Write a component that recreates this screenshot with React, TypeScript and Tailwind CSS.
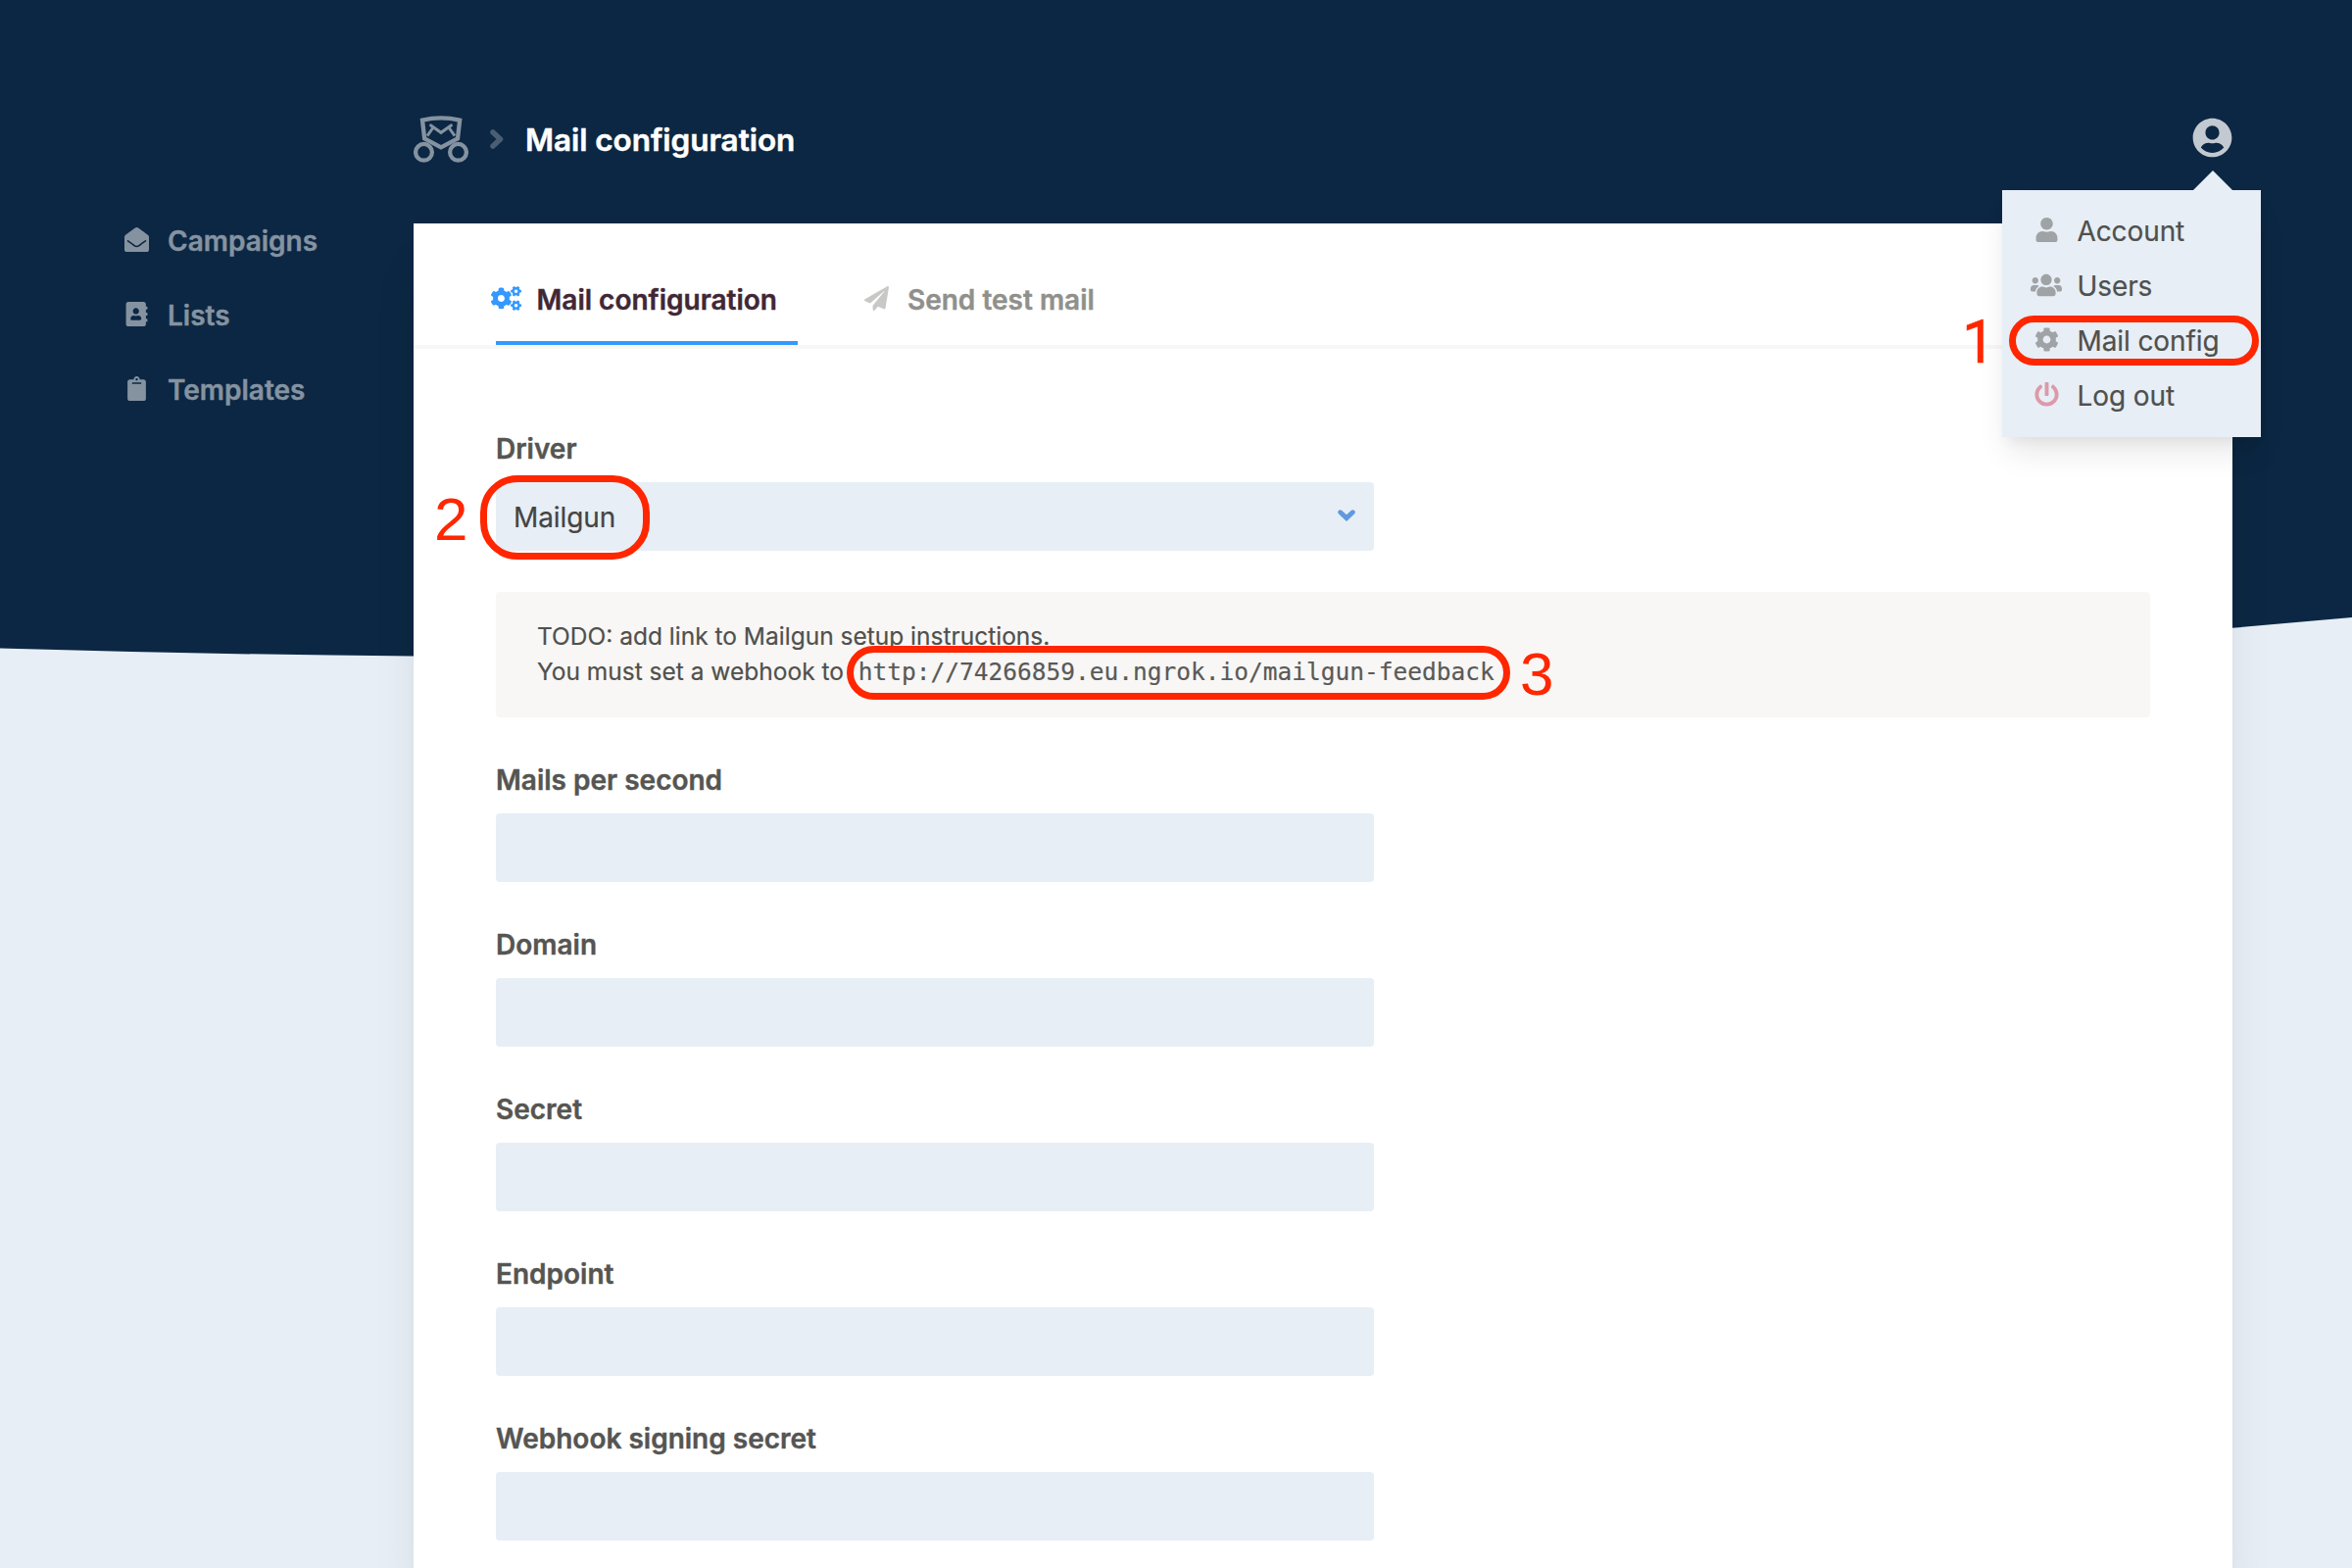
import React from "react";
import type { ReactNode } from "react";
import {
  FaAddressBook,
  FaClipboard,
  FaCog,
  FaCogs,
  FaEnvelopeOpen,
  FaPaperPlane,
  FaPowerOff,
  FaUser,
  FaUserCircle,
  FaUsers,
} from "react-icons/fa";

/** Fixed-width slot that keeps labels aligned whatever the icon's width. */
function IconSlot({ children, className = "" }: { children: ReactNode; className?: string }) {
  return <span className={`flex w-[21px] shrink-0 items-center justify-center pb-[3px] ${className}`}>{children}</span>;
}

function Backdrop() {
  return (
    <svg className="absolute top-0 left-0" width="2400" height="700" viewBox="0 0 2400 700" aria-hidden="true">
      <path
        d="M0 0H2400V630L2278 640.8C1700 690 1000 674 422 669.5Q211 667.7 0 661.5Z"
        fill="#0c2743"
      />
    </svg>
  );
}

function Logo() {
  return (
    <svg width="56" height="48" viewBox="66 84 168 144" fill="none" stroke="#8593a1" aria-hidden="true">
      <path d="M93 98Q150 84 207.500 98L201 154L150 181L99.500 154Z" strokeWidth="13" />
      <path d="M119 114L150 136L181 114" strokeWidth="9.500" strokeLinecap="round" />
      <path d="M125 122L108 146M175 122L192 146" strokeWidth="8.500" />
      <circle cx="97.500" cy="196" r="25.200" strokeWidth="12.800" />
      <circle cx="202.500" cy="196" r="25.200" strokeWidth="12.800" />
    </svg>
  );
}

const NAV = [
  { label: "Campaigns", Icon: FaEnvelopeOpen },
  { label: "Lists", Icon: FaAddressBook },
  { label: "Templates", Icon: FaClipboard },
];

function Sidebar() {
  return (
    <nav className="flex w-[422px] shrink-0 flex-col pt-[208px] pl-[129px]">
      {NAV.map(({ label, Icon }) => (
        <a key={label} className="flex h-[76px] items-center gap-[21px] text-[28px] font-semibold text-[#8593a1] [-webkit-text-stroke:0.4px]">
          <IconSlot>
            <Icon className="h-[25px] w-auto shrink-0" />
          </IconSlot>
          {label}
        </a>
      ))}
    </nav>
  );
}

const MENU = [
  { label: "Account", Icon: FaUser, tone: "text-[#9fa3a6]" },
  { label: "Users", Icon: FaUsers, tone: "text-[#9fa3a6]" },
  { label: "Mail config", Icon: FaCog, tone: "text-[#9fa3a6]" },
  { label: "Log out", Icon: FaPowerOff, tone: "text-[#dc9aa8]" },
];

function UserMenu() {
  return (
    <div className="absolute top-[74px] -right-[29px] z-10 h-[252px] w-[264px] bg-[#e7eef6] shadow-[0_20px_30px_-6px_rgba(0,0,0,0.1),0_8px_12px_-4px_rgba(0,0,0,0.05)]">
      <svg className="absolute -top-[20px] right-[29px]" width="40" height="20" viewBox="0 0 40 20" aria-hidden="true">
        <path d="M0 20L20 0L40 20Z" fill="#e7eef6" />
      </svg>
      <ul className="flex flex-col pt-[14px] pl-[34.5px]">
        {MENU.map(({ label, Icon, tone }) => (
          <li key={label} className="flex h-[56px] items-center gap-[21px] text-[28px] tracking-[-0.1px] text-[#50504d] [-webkit-text-stroke:0.2px]">
            <IconSlot className={tone}>
              <Icon className={label === "Users" ? "h-[26px] w-[32px] shrink-0" : "h-[25px] w-auto shrink-0"} />
            </IconSlot>
            {label}
          </li>
        ))}
      </ul>
    </div>
  );
}

function Header() {
  return (
    <header className="flex h-[228px] items-center pt-[56px]">
      <Logo />
      <svg className="ml-[22px]" width="14" height="20" viewBox="0 0 14 20" fill="none" stroke="#4b5d73" strokeWidth="5.500" strokeLinecap="round" strokeLinejoin="round" aria-hidden="true">
        <path d="M3 3L10.500 10L3 17" />
      </svg>
      <h1 className="ml-[22px] pt-px text-[31.5px] font-semibold tracking-[-0.05px] text-white [-webkit-text-stroke:0.5px]">Mail configuration</h1>
      <div className="relative ml-auto">
        <FaUserCircle className="mb-[3px] size-[41px]" color="#c3c9d0" />
        <UserMenu />
      </div>
    </header>
  );
}

function Tabs() {
  return (
    <div className="flex h-[128px] gap-[70px] border-b-4 border-[#f8f7f6] pl-[84px] text-[28px] font-semibold [-webkit-text-stroke:0.4px]">
      <a className="flex items-center gap-[20.5px] border-b-4 border-[#3399ff] pt-[36px] pr-[21px] text-[#412735]">
        <IconSlot className="text-[#3399ff]">
          <FaCogs className="h-[25px] w-[31px] shrink-0" />
        </IconSlot>
        Mail configuration
      </a>
      <a className="flex items-center gap-[21px] border-b-4 border-transparent pt-[36px] text-[#90908b]">
        <IconSlot className="text-[#c8c8c6]">
          <FaPaperPlane className="h-[25px] w-auto shrink-0" />
        </IconSlot>
        Send test mail
      </a>
    </div>
  );
}

function Field({ label, children }: { label: string; children?: ReactNode }) {
  return (
    <div className="flex flex-col gap-[20px]">
      <label className="text-[28px] leading-[28px] font-semibold text-[#555552] [-webkit-text-stroke:0.4px]">{label}</label>
      <div className="flex h-[70px] w-[896px] items-center justify-between rounded-[4px] bg-[#e7eef6] pr-[19px] pl-[18px] text-[28px] text-[#444443]">
        {children}
      </div>
    </div>
  );
}

const FIELDS = ["Mails per second", "Domain", "Secret", "Endpoint", "Webhook signing secret"];

function ConfigForm() {
  return (
    <form className="flex flex-col px-[84px] pt-[88px]">
      <Field label="Driver">
        <span className="pt-px tracking-[-0.1px] [-webkit-text-stroke:0.2px]">Mailgun</span>
        <svg width="18" height="12" viewBox="0 0 18 12" className="mb-[3px]" fill="none" stroke="#6099dd" strokeWidth="4.800" strokeLinecap="round" aria-hidden="true">
          <path d="M2.700 2.700L9 8.600L15.300 2.700" />
        </svg>
      </Field>
      <p className="mt-[42px] rounded-[4px] bg-[#f8f7f5] px-[42px] pt-[27px] pb-[29px] text-[24.5px] leading-[36px] text-[#50504d] [-webkit-text-stroke:0.2px]">
        TODO: add link to Mailgun setup instructions.
        <br />
        You must set a webhook to{" "}
        <code className="ml-[8px] font-['DejaVu_Sans_Mono',monospace] leading-none text-[#5a5a58]">
          http://74266859.eu.ngrok.io/mailgun-feedback
        </code>
      </p>
      <div className="mt-[50px] flex flex-col gap-[50px]">
        {FIELDS.map((label) => (
          <Field key={label} label={label} />
        ))}
      </div>
    </form>
  );
}

/** Numbered red outlines laid over the page. */
function Annotations() {
  return (
    <div className="pointer-events-none absolute inset-0 z-20 leading-none text-[#ff2600]">
      <span className="absolute top-[320px] left-[2002px] font-[Roboto,sans-serif] text-[60.5px] [-webkit-text-stroke:0.5px]">1</span>
      <div className="absolute top-[322px] left-[2050px] h-[51px] w-[255px] rounded-[26px] border-[7px] border-[#ff2600]" />
      <span className="absolute top-[499px] left-[443px] font-['Liberation_Sans',sans-serif] text-[62px]">2</span>
      <div className="absolute top-[485px] left-[490px] h-[86px] w-[173px] rounded-[38px] border-[7px] border-[#ff2600]" />
      <span className="absolute top-[657px] left-[1551px] font-['Liberation_Sans',sans-serif] text-[62px]">3</span>
      <div className="absolute top-[659px] left-[863.5px] h-[55px] w-[677px] rounded-[28px] border-[7px] border-[#ff2600]" />
    </div>
  );
}

export default function App() {
  return (
    <div className="relative h-[1600px] w-[2400px] overflow-hidden bg-[#e7eef6] font-[Inter,sans-serif]">
      <Backdrop />
      <div className="relative flex h-full">
        <Sidebar />
        <div className="flex w-[1856px] flex-col">
          <Header />
          <main className="grow bg-white shadow-[0_40px_50px_-10px_rgba(0,0,0,0.1),0_20px_20px_-10px_rgba(0,0,0,0.04)]">
            <Tabs />
            <ConfigForm />
          </main>
        </div>
      </div>
      <Annotations />
    </div>
  );
}
